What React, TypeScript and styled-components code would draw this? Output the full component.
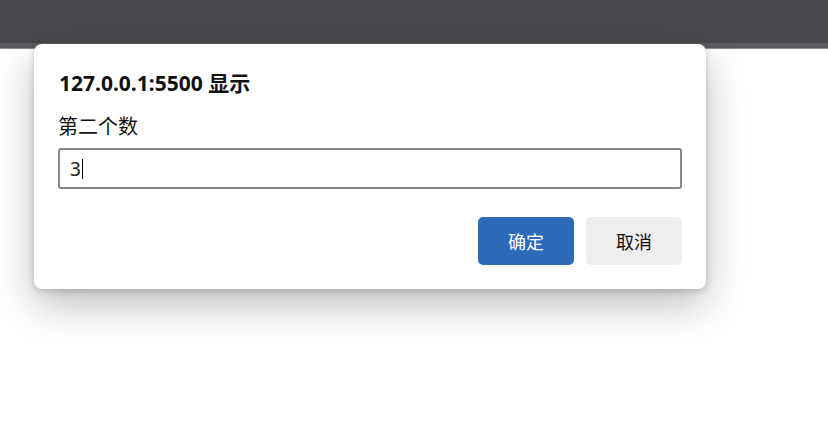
import React from "react";
import styled, { createGlobalStyle } from "styled-components";

const Global = createGlobalStyle`
  html, body { margin: 0; padding: 0; background: #ffffff; }
  body { width: 828px; height: 424px; overflow: hidden; font-family: "Noto Sans", "Noto Sans CJK SC", sans-serif; }
`;

const Page = styled.div`
  position: relative;
  width: 828px;
  height: 424px;
  background: #ffffff;
`;

const TopBar = styled.div`
  height: 43px;
  background: #48494d;
`;

const TopStrip = styled.div`
  height: 5px;
  background: #5b5c60;
  border-bottom: 1px solid #8c8d90;
`;

const Dialog = styled.div`
  position: absolute;
  left: 34px;
  top: 44px;
  width: 672px;
  box-sizing: border-box;
  padding: 25px 24px 24px 24px;
  background: #ffffff;
  border-radius: 8px;
  box-shadow: 0 16px 40px rgba(0, 0, 0, 0.26), 0 2px 6px rgba(0, 0, 0, 0.18);
  display: flex;
  flex-direction: column;
`;

const Title = styled.div`
  font-family: "Noto Sans", "Noto Sans CJK SC", sans-serif;
  font-weight: 700;
  font-size: 21px;
  line-height: 28px;
  color: #111111;
  padding-left: 1px;
`;

const Label = styled.div`
  margin-top: 15px;
  font-family: "Noto Sans CJK SC", sans-serif;
  font-size: 20px;
  line-height: 28px;
  color: #111111;
  padding-left: 0px;
`;

const Field = styled.div`
  margin-top: 8px;
  height: 41px;
  box-sizing: border-box;
  border: 2px solid #848688;
  border-radius: 3px;
  padding: 0 10px;
  display: flex;
  align-items: center;
  font-family: "Noto Sans", sans-serif;
  font-size: 19px;
  color: #222222;
`;

const Caret = styled.span`
  display: inline-block;
  width: 1px;
  height: 20px;
  background: #000000;
  margin-left: 1px;
`;

const Actions = styled.div`
  margin-top: 28px;
  display: flex;
  justify-content: flex-end;
  gap: 12px;
`;

const Button = styled.button<{ $primary?: boolean }>`
  width: 96px;
  height: 48px;
  border: none;
  border-radius: 5px;
  font-family: "Noto Sans CJK SC", sans-serif;
  font-size: 18px;
  background: ${(p) => (p.$primary ? "#2d6bb9" : "#efefef")};
  color: ${(p) => (p.$primary ? "#ffffff" : "#111111")};
  padding: 0;
`;

export default function App() {
  return (
    <Page>
      <Global />
      <TopBar />
      <TopStrip />
      <Dialog>
        <Title>127.0.0.1:5500 显示</Title>
        <Label>第二个数</Label>
        <Field>
          3<Caret />
        </Field>
        <Actions>
          <Button $primary>确定</Button>
          <Button>取消</Button>
        </Actions>
      </Dialog>
    </Page>
  );
}
